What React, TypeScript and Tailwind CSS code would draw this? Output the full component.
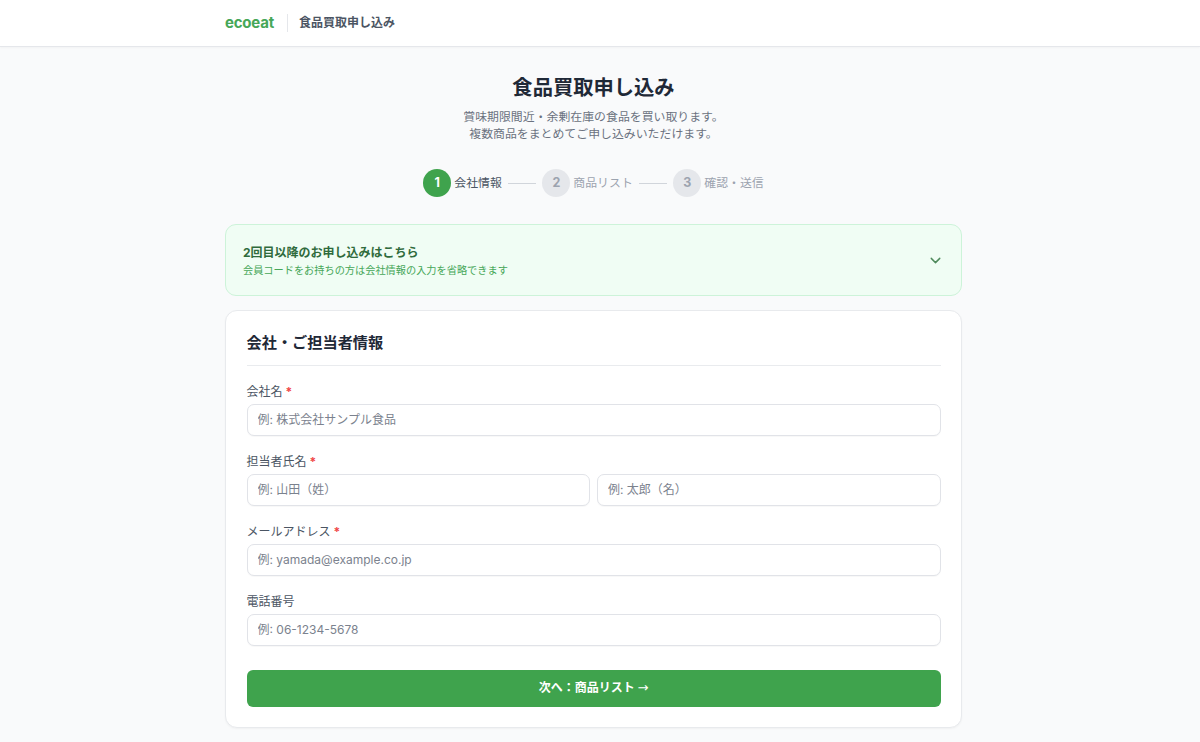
import { ChevronDown } from 'lucide-react';

const font = { fontFamily: 'Inter, "Noto Sans CJK JP", sans-serif' };

function Step({ n, label, active }: { n: number; label: string; active?: boolean }) {
  return (
    <div className="flex items-center gap-[3px]">
      <div
        className={
          active
            ? 'flex h-[28px] w-[28px] items-center justify-center rounded-full bg-[#3fa34d] text-[12.5px] font-bold text-white'
            : 'flex h-[28px] w-[28px] items-center justify-center rounded-full bg-[#e5e7eb] text-[12.5px] font-bold text-[#9ca3af]'
        }
      >
        {n}
      </div>
      <span className={active ? 'text-[11.9px] text-[#4b5563]' : 'text-[11.9px] text-[#9ca3af]'}>{label}</span>
    </div>
  );
}

function Field({ placeholder }: { placeholder: string }) {
  return (
    <input
      placeholder={placeholder}
      className="h-[32px] w-full rounded-[7px] border border-[#e1e3e8] bg-white px-[10px] text-[12px] text-[#374151] shadow-[0_1px_1px_rgba(0,0,0,0.03)] outline-none placeholder:text-[#7b828e]"
    />
  );
}

function Label({ text, required }: { text: string; required?: boolean }) {
  return (
    <label className="mb-[3.5px] block h-[17px] text-[12px] leading-[17px] text-[#4b5563]">
      {text}
      {required && <span className="ml-[3px] font-bold text-[#ef4444]">*</span>}
    </label>
  );
}

export default function App() {
  return (
    <div className="h-[742px] overflow-hidden bg-[#f9fafb]" style={font}>
      <header className="h-[47px] border-b border-[#e5e7eb] bg-white shadow-[0_1px_2px_rgba(0,0,0,0.03)]">
        <div className="w-[1187px]">
          <div className="mx-auto flex h-[46px] w-[737px] items-center">
            <span className="text-[15px] font-bold tracking-[-0.2px] text-[#46a758]">ecoeat</span>
            <div className="ml-[13px] h-[18px] w-px bg-[#e5e7eb]" />
            <span className="ml-[11px] text-[12px] font-bold text-[#4b5563]">食品買取申し込み</span>
          </div>
        </div>
      </header>

      <div className="w-[1187px]">
        <main className="mx-auto w-[737px]">
          <div className="pt-[27px] text-center">
            <h1 className="h-[28px] text-[20.3px] font-bold leading-[28px] text-[#1f2937]">食品買取申し込み</h1>
            <p className="mt-[6px] text-[11.9px] leading-[17px] text-[#6b7280]">
              賞味期限間近・余剰在庫の食品を買い取ります。
              <br />
              複数商品をまとめてご申し込みいただけます。
            </p>
          </div>

          <div className="mt-[27px] flex items-center justify-center gap-[6.25px]">
            <Step n={1} label="会社情報" active />
            <div className="h-px w-[28px] bg-[#d1d5db]" />
            <Step n={2} label="商品リスト" />
            <div className="h-px w-[28px] bg-[#d1d5db]" />
            <Step n={3} label="確認・送信" />
          </div>

          <section className="mt-[27px] flex h-[72px] items-center justify-between rounded-[11px] border border-[#cdf3d9] bg-[#f0fdf4] pl-[17px] pr-[17px]">
            <div className="pt-[2px]">
              <p className="text-[12px] font-bold leading-[17px] text-[#2f6b3c]">2回目以降のお申し込みはこちら</p>
              <p className="mt-[2px] text-[10.2px] leading-[15px] text-[#46a758]">
                会員コードをお持ちの方は会社情報の入力を省略できます
              </p>
            </div>
            <ChevronDown className="h-[17px] w-[17px] text-[#4f8a5c]" strokeWidth={2} />
          </section>

          <section className="mt-[14px] h-[418px] rounded-[12px] border border-[#e8eaed] bg-white px-[20.5px] pt-[21px] shadow-[0_1px_2px_rgba(0,0,0,0.04)]">
            <h2 className="h-[34px] border-b border-[#e9ebee] text-[15.2px] font-bold leading-[21px] text-[#1f2937]">
              会社・ご担当者情報
            </h2>

            <div className="mt-[17px] flex flex-col gap-[17.5px]">
              <div>
                <Label text="会社名" required />
                <Field placeholder="例: 株式会社サンプル食品" />
              </div>
              <div>
                <Label text="担当者氏名" required />
                <div className="grid grid-cols-2 gap-[7px]">
                  <Field placeholder="例: 山田（姓）" />
                  <Field placeholder="例: 太郎（名）" />
                </div>
              </div>
              <div>
                <Label text="メールアドレス" required />
                <Field placeholder="例: yamada@example.co.jp" />
              </div>
              <div>
                <Label text="電話番号" />
                <Field placeholder="例: 06-1234-5678" />
              </div>
            </div>

            <button className="mt-[24px] h-[37px] w-full rounded-[6px] bg-[#3fa34d] text-[12px] font-bold text-white">
              次へ：商品リスト <span className="text-[13px] font-normal font-['DejaVu_Sans']">→</span>
            </button>
          </section>
        </main>
      </div>
    </div>
  );
}
